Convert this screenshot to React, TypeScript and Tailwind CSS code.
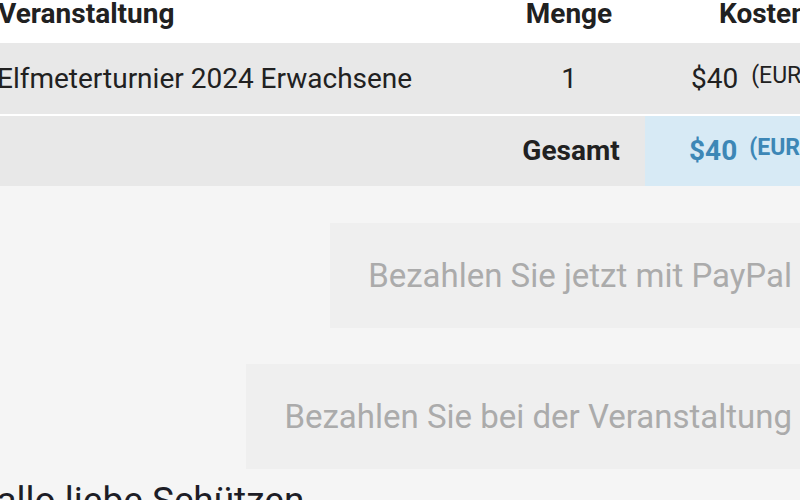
export default function App() {
  return (
    <div className="w-[800px] h-[500px] overflow-hidden bg-[#f5f5f5] font-['Roboto',sans-serif] text-[#212121]">
      <div className="ml-[-20px] w-[905px]">
        {/* table header */}
        <div className="grid grid-cols-[513px_152px_240px] h-[43px] bg-white text-[28px] font-bold leading-[28px]">
          <div className="pl-[18px]">Veranstaltung</div>
          <div className="text-center">Menge</div>
          <div className="pl-[74px]">Kosten</div>
        </div>

        {/* event row */}
        <div className="grid grid-cols-[513px_152px_240px] h-[71px] bg-[#e8e8e8] items-center text-[28px]">
          <div className="pl-[17px]">Elfmeterturnier 2024 Erwachsene</div>
          <div className="text-center">1</div>
          <div className="pl-[46px] whitespace-nowrap">
            $40<span className="text-[23px] ml-[13px] relative top-[-5px]">(EUR)</span>
          </div>
        </div>

        <div className="h-[2px] bg-white" />

        {/* total row */}
        <div className="grid grid-cols-[513px_152px_240px] h-[70px] bg-[#e8e8e8] items-center text-[28px] font-bold">
          <div />
          <div className="text-center pl-[4px]">Gesamt</div>
          <div className="h-full flex items-center pl-[44px] bg-[#d7eaf5] text-[#3d87b6] whitespace-nowrap">
            $40<span className="text-[23px] ml-[12px] relative top-[-3px]">(EUR)</span>
          </div>
        </div>
      </div>

      {/* payment buttons */}
      <div className="flex flex-col items-end gap-[36px] mt-[37px] mr-[-30px]">
        <button className="h-[105px] px-[38px] bg-[#efefef] text-[33px] text-[#ababab]">
          Bezahlen Sie jetzt mit PayPal
        </button>
        <button className="h-[105px] px-[38px] bg-[#efefef] text-[33px] text-[#ababab]">
          Bezahlen Sie bei der Veranstaltung
        </button>
      </div>

      <h2 className="mt-[10px] ml-[-30px] text-[37px] leading-[44px] text-[#1d1d26]">Hallo liebe Schützen</h2>
    </div>
  );
}
